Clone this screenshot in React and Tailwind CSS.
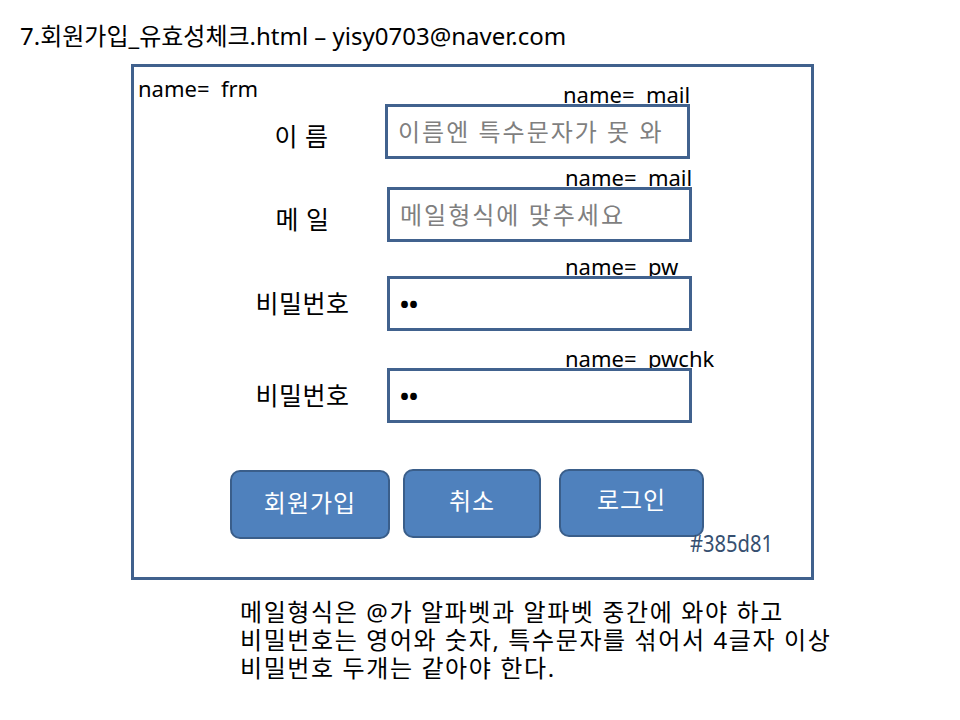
import React from 'react';

const font = "font-['Noto_Sans','Noto_Sans_CJK_KR',sans-serif]";

function Field({ label, name, placeholder, value, labelWidth, rowClass, labelClass }) {
    return (
        <div className={`flex items-end ${rowClass}`}>
            <div className={`${labelWidth} pl-[84px] h-[55px] flex items-center justify-center`}>
                <span className={`text-[25px] leading-none tracking-[0.5px] text-black ${labelClass}`}>{label}</span>
            </div>
            <div className="flex flex-col">
                <div className="pl-[178px] h-[20px] text-[22px] leading-[20px] text-black whitespace-pre">{name}</div>
                <div className="w-[305px] h-[55px] border-[3px] border-[#41628e] bg-white flex items-center pl-[10px]">
                    {placeholder ? (
                        <span className="text-[24px] tracking-[2px] text-[#7f7f7f] leading-none">{placeholder}</span>
                    ) : (
                        <span className="text-[24px] font-bold text-black leading-none">{value}</span>
                    )}
                </div>
            </div>
        </div>
    );
}

export default function App() {
    return (
        <div className={`w-[960px] h-[720px] bg-white ${font} text-black overflow-hidden`}>
            <div className="pt-[23px] pl-[20px] h-[50px] text-[24px] leading-[26px]">
                7.회원가입_유효성체크.html – yisy0703@naver.com
            </div>

            <div className="ml-[131px] mt-[14px] w-[683px] h-[516px] border-[3px] border-[#40618d]">
                <div className="pt-[11px] pl-[4px] h-[31px] text-[22px] leading-[20px] whitespace-pre">name=  frm</div>

                <Field label="이 름" name="name=  mail" placeholder="이름엔 특수문자가 못 와"
                    labelWidth="w-[251px]" rowClass="-mt-[14px]" labelClass="pt-[10px]" />
                <Field label="메 일" name="name=  mail" placeholder="메일형식에 맞추세요"
                    labelWidth="w-[253px]" rowClass="mt-[8px]" labelClass="pt-[10px]" />
                <Field label="비밀번호" name="name=  pw" value="••"
                    labelWidth="w-[253px]" rowClass="mt-[14px]" labelClass="" />
                <Field label="비밀번호" name="name=  pwchk" value="••"
                    labelWidth="w-[253px]" rowClass="mt-[17px]" labelClass="" />

                <div className="flex mt-[47px] ml-[96px]">
                    <button className="w-[160px] h-[69px] rounded-[10px] bg-[#4f81bd] border-2 border-[#3a5e8a] text-white text-[24px] tracking-[1px] pb-[4px]">
                        회원가입
                    </button>
                    <button className="ml-[13px] -mt-[1px] w-[138px] h-[69px] rounded-[10px] bg-[#4f81bd] border-2 border-[#3a5e8a] text-white text-[24px] tracking-[1px] pb-[6px]">
                        취소
                    </button>
                    <button className="ml-[18px] -mt-[1px] w-[145px] h-[68px] rounded-[10px] bg-[#4f81bd] border-2 border-[#3a5e8a] text-white text-[24px] tracking-[1px] pb-[6px]">
                        로그인
                    </button>
                </div>
                <div className="ml-[556px] -mt-[8px] text-[24px] leading-[24px] text-[#364f70] origin-left scale-x-[0.84] w-[120px]">
                    #385d81
                </div>
            </div>

            <div className="mt-[18px] ml-[240px] text-[24px] leading-[28px] tracking-[1.6px] text-black">
                <p>메일형식은 @가 알파벳과 알파벳 중간에 와야 하고</p>
                <p>비밀번호는 영어와 숫자, 특수문자를 섞어서 4글자 이상</p>
                <p>비밀번호 두개는 같아야 한다.</p>
            </div>
        </div>
    );
}
